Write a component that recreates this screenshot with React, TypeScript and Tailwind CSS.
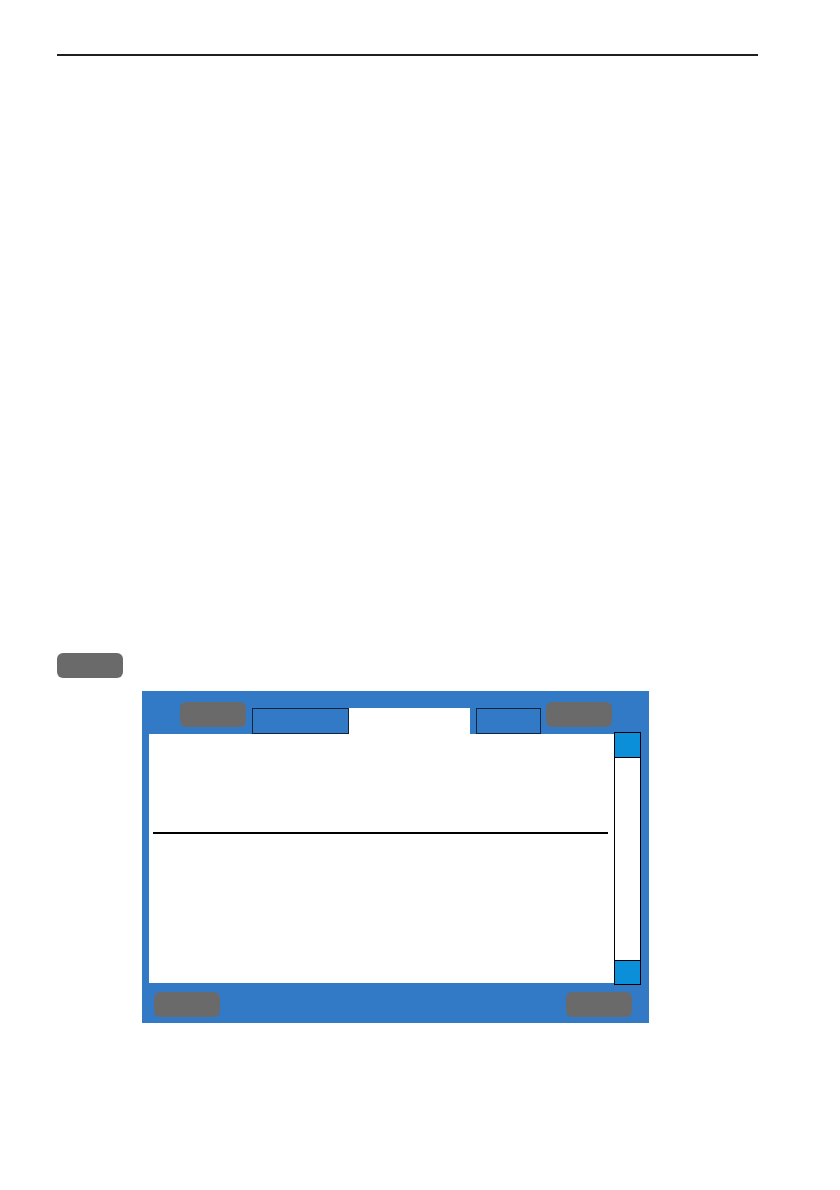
import React from 'react';

const GrayButton = ({ className = '' }: { className?: string }) => (
  <div className={`w-[66px] h-[25px] rounded-[6px] bg-[#6b6a6b] ${className}`} />
);

export default function App() {
  return (
    <div className="w-[840px] h-[1190px] bg-white relative overflow-hidden font-['Liberation_Sans',sans-serif]">
      {/* page header rule */}
      <div className="mt-[54px] ml-[57px] w-[701px] h-[2px] bg-[#231f20]" />

      <div className="mt-[597px] ml-[57px]">
        <GrayButton className="h-[24px]" />
      </div>

      {/* screen panel */}
      <div className="mt-[13px] ml-[142px] w-[507px] h-[332px] bg-[#3279c6] flex flex-col">
        {/* tab header */}
        <div className="h-[43px] flex items-end pl-[38px]">
          <GrayButton className="self-start mt-[11px]" />
          <div className="ml-[6px] w-[97px] h-[26px] border border-[#10243f] bg-[#3279c6]" />
          <div className="w-[121px] h-[26px] bg-white" />
          <div className="ml-[6px] w-[65px] h-[26px] border border-[#10243f] bg-[#3279c6]" />
          <GrayButton className="self-start mt-[11px] ml-[5px]" />
        </div>

        {/* content */}
        <div className="flex ml-[7px] h-[249px]">
          <div className="w-[465px] h-full bg-white pt-[98px] pl-[4px]">
            <div className="w-[455px] h-[2px] bg-black" />
          </div>
          <div className="w-[27px] -mt-[2px] h-[253px] border border-black bg-white flex flex-col justify-between">
            <div className="h-[25px] bg-[#0b8fd8] border-b border-black" />
            <div className="h-[24px] bg-[#0b8fd8] border-t border-black" />
          </div>
        </div>

        {/* bottom buttons */}
        <div className="flex justify-between pl-[12px] pr-[17px] mt-[9px]">
          <GrayButton className="h-[23px]" />
          <GrayButton className="h-[23px]" />
        </div>
      </div>
    </div>
  );
}
